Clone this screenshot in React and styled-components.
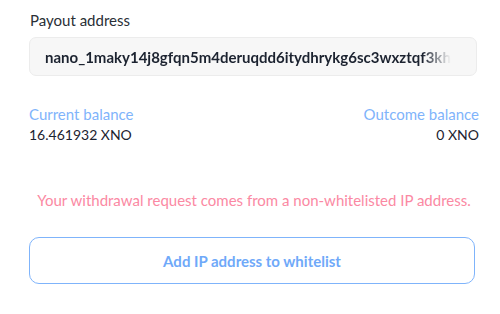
import React from "react";
import styled, { createGlobalStyle } from "styled-components";

const Global = createGlobalStyle`
  html, body { margin: 0; padding: 0; background: #fff; }
  body { font-family: Lato, "Open Sans", sans-serif; }
`;

const Panel = styled.div`
  width: 450px;
  padding: 10px 21px 0 29px;
  display: flex;
  flex-direction: column;
`;

const Label = styled.div`
  font-size: 15px;
  line-height: 20px;
  color: #2a2f36;
  margin-left: 1px;
`;

const AddressBox = styled.div`
  margin-top: 7px;
  width: 448px;
  height: 39px;
  box-sizing: border-box;
  border: 1px solid #ececec;
  border-radius: 7px;
  background: #f7f7f7;
  padding: 0 19px 0 15px;
  display: flex;
  align-items: center;
  overflow: hidden;
`;

const Address = styled.div`
  font-size: 15px;
  font-weight: 700;
  color: #1c2330;
  white-space: nowrap;
  overflow: hidden;
  -webkit-mask-image: linear-gradient(to right, #000 93%, transparent 100%);
  mask-image: linear-gradient(to right, #000 93%, transparent 100%);
`;

const Balances = styled.div`
  margin-top: 29px;
  display: flex;
  justify-content: space-between;
`;

const BalanceCol = styled.div`
  display: flex;
  flex-direction: column;
  align-items: ${(p) => (p.$right ? "flex-end" : "flex-start")};
  gap: 3px;
`;

const BalanceLabel = styled.div`
  font-size: 15px;
  line-height: 18px;
  color: #7fb4fb;
`;

const BalanceValue = styled.div`
  font-size: 14px;
  line-height: 18px;
  color: #1c2330;
`;

const Warning = styled.div`
  margin-top: 46px;
  text-align: center;
  font-size: 15px;
  line-height: 20px;
  color: #fb89a3;
`;

const Button = styled.button`
  margin-top: 27px;
  width: 446px;
  height: 47px;
  border: 1.5px solid #7fb4fb;
  border-radius: 10px;
  background: #fff;
  color: #6fa9f9;
  font-family: inherit;
  font-size: 15px;
  font-weight: 700;
  cursor: pointer;
`;

export default function App() {
  return (
    <>
      <Global />
      <Panel>
        <Label>Payout address</Label>
        <AddressBox>
          <Address>nano_1maky14j8gfqn5m4deruqdd6itydhrykg6sc3wxztqf3kh</Address>
        </AddressBox>
        <Balances>
          <BalanceCol>
            <BalanceLabel>Current balance</BalanceLabel>
            <BalanceValue>16.461932 XNO</BalanceValue>
          </BalanceCol>
          <BalanceCol $right>
            <BalanceLabel>Outcome balance</BalanceLabel>
            <BalanceValue>0 XNO</BalanceValue>
          </BalanceCol>
        </Balances>
        <Warning>Your withdrawal request comes from a non-whitelisted IP address.</Warning>
        <Button>Add IP address to whitelist</Button>
      </Panel>
    </>
  );
}
